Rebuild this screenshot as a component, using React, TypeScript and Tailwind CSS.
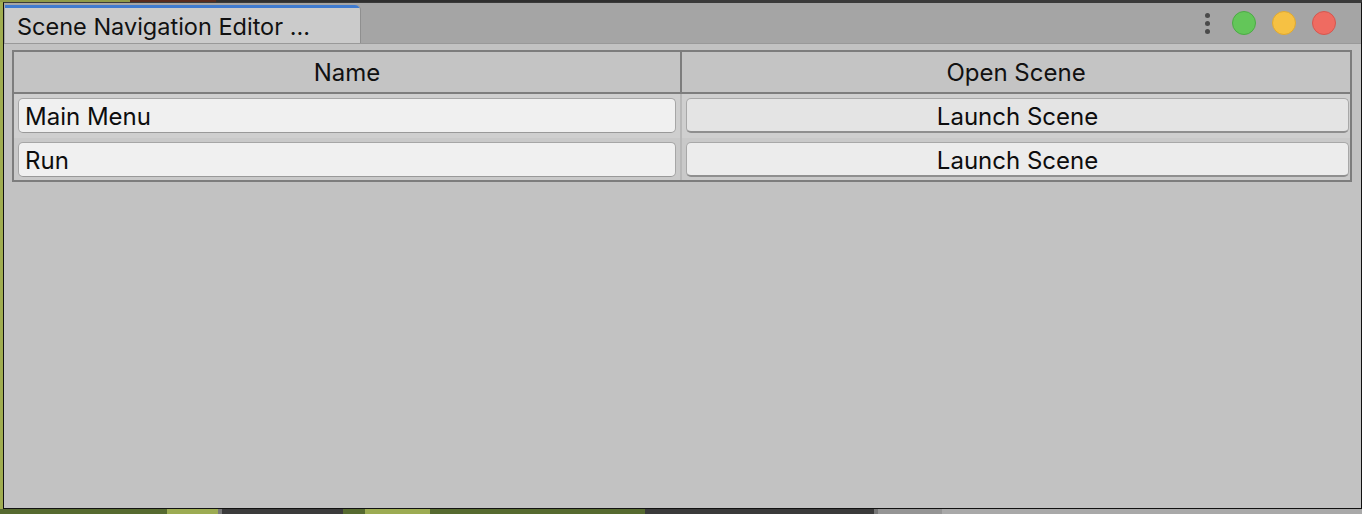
import React from "react";

const font = { fontFamily: "Inter, 'Noto Sans', sans-serif" };

type Scene = { id: number; name: string };

const scenes: Scene[] = [
  { id: 1, name: "Main Menu" },
  { id: 2, name: "Run" },
];

function TitleBar() {
  return (
    <div className="flex h-[41px] items-stretch bg-[#a5a5a5] border-b border-[#999999]">
      <div className="ml-[1px] mt-[2px] flex w-[355px] flex-col rounded-tr-[5px] bg-[#cbcbcb] shadow-[1px_0_0_#8f8f8f] overflow-hidden">
        <div className="h-[3px] bg-[#3f7bd0]" />
        <div className="flex flex-1 items-center pl-[12px] pt-[2px] text-[23.5px] leading-none text-[#111111]">
          Scene Navigation Editor ...
        </div>
      </div>
      <div className="flex-1" />
      <div className="flex items-center gap-[16px] pr-[25px]">
        <div className="mr-[6px] flex flex-col gap-[3px]">
          <span className="h-[5px] w-[5px] rounded-full bg-[#4a4a4a]" />
          <span className="h-[5px] w-[5px] rounded-full bg-[#4a4a4a]" />
          <span className="h-[5px] w-[5px] rounded-full bg-[#4a4a4a]" />
        </div>
        <span className="h-[24px] w-[24px] rounded-full border border-[#4cab45] bg-[#63c659]" />
        <span className="h-[24px] w-[24px] rounded-full border border-[#e0a930] bg-[#f6c143]" />
        <span className="h-[24px] w-[24px] rounded-full border border-[#d5574f] bg-[#ef6b61]" />
      </div>
    </div>
  );
}

function SceneTable() {
  return (
    <div className="ml-[8px] mr-[9px] mt-[6px] border-2 border-[#7d7d7d] bg-[#cbcbcb]">
      <div className="grid h-[42px] grid-cols-2 border-b-2 border-[#7d7d7d] bg-[#c4c4c4] text-[24px] leading-none text-[#111111]">
        <div className="flex items-center justify-center border-r-2 border-[#7d7d7d] pt-[1px]">Name</div>
        <div className="flex items-center justify-center pt-[1px]">Open Scene</div>
      </div>
      {scenes.map((scene, i) => (
        <div
          key={scene.id}
          className={
            i === 0
              ? "grid h-[44px] grid-cols-2 bg-[#cfcfcf]"
              : "grid h-[42px] grid-cols-2 bg-[#c9c9c9]"
          }
        >
          <div className="flex items-start border-r-2 border-[#b8b8b8] pl-[4px] pr-[4px] pt-[4px]">
            <div className="flex h-[35px] w-full items-center rounded-[5px] border border-[#a6a6a6] border-b-[#999999] bg-[#f0f0f0] pl-[6px] pt-[3px] text-[24px] leading-none text-[#0d0d0d]">
              {scene.name}
            </div>
          </div>
          <div className="flex items-start pl-[4px] pr-[1px] pt-[4px]">
            <button
              className={
                i === 0
                  ? "flex h-[35px] w-full items-center justify-center rounded-[5px] border border-[#a8a8a8] border-b-2 border-b-[#8f8f8f] bg-[#e4e4e4] pt-[3px] text-[24px] leading-none text-[#0d0d0d]"
                  : "flex h-[35px] w-full items-center justify-center rounded-[5px] border border-[#a8a8a8] border-b-2 border-b-[#8f8f8f] bg-[#ececec] pt-[3px] text-[24px] leading-none text-[#0d0d0d]"
              }
            >
              Launch Scene
            </button>
          </div>
        </div>
      ))}
    </div>
  );
}

export default function App() {
  return (
    <div className="flex h-[514px] w-[1362px] flex-col overflow-hidden bg-[#3a3a3a]" style={font}>
      <div className="flex h-[2px]">
        <div className="w-[130px] bg-[#8f9c48]" />
        <div className="w-[86px] bg-[#5a2a1c]" />
        <div className="w-[444px] bg-[#2f2f2f]" />
        <div className="flex-1 bg-[#3a3a3a]" />
      </div>
      <div className="flex flex-1">
        <div className="w-[3px] bg-[#a0ad50]" />
        <div className="flex flex-1 flex-col border border-t-[#3a3a3a] border-[#111111] bg-[#c2c2c2]">
          <TitleBar />
          <SceneTable />
        </div>
      </div>
      <div className="flex h-[5px]">
        <div className="w-[167px] bg-[#566a30]" />
        <div className="w-[51px] bg-[#9cab52]" />
        <div className="w-[4px] bg-[#777777]" />
        <div className="w-[121px] bg-[#3b3b3b]" />
        <div className="w-[22px] bg-[#566a30]" />
        <div className="w-[65px] bg-[#9cab52]" />
        <div className="w-[186px] bg-[#566a30]" />
        <div className="w-[29px] bg-[#566a30]" />
        <div className="w-[229px] bg-[#3a3a3a]" />
        <div className="w-[4px] bg-[#777777]" />
        <div className="w-[64px] bg-[#959595]" />
        <div className="flex-1 bg-[#a9a9a9]" />
      </div>
    </div>
  );
}
